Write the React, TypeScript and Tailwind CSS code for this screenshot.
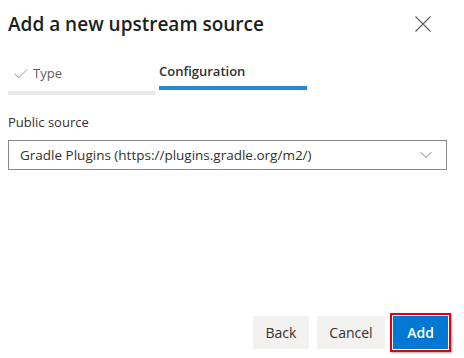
import { ChevronDown, Check } from "lucide-react";

function App() {
  return (
    <div className="w-[464px] h-[358px] bg-white flex flex-col text-[#323130] font-['Segoe_UI','Open_Sans',sans-serif]">
      {/*Header*/}
      <div className="flex items-center justify-between pl-2 pr-[33px] pt-[8px] h-[40px]">
        <h1 className="text-[19px] leading-[28px] font-semibold text-[#201f1e]">Add a new upstream source</h1>
        <svg width="16" height="16" viewBox="0 0 16 16" className="text-[#605e5c]">
          <path d="M0.5 0.5 L15.5 15.5 M15.5 0.5 L0.5 15.5" stroke="currentColor" strokeWidth="1.1" fill="none" />
        </svg>
      </div>

      {/*Tabs*/}
      <div className="flex px-2 mt-[17px] gap-1">
        <div className="w-[147px] flex flex-col">
          <div className="flex items-center gap-[3px] pl-[4px] h-[34px] text-[13px] text-[#605e5c]">
            <Check className="w-[18px] h-[18px] text-[#8a8886]" strokeWidth={1.1} />
            Type
          </div>
          <div className="h-[4px] bg-[#e8e8e8]" />
        </div>
        <div className="w-[148px] flex flex-col">
          <div className="h-[29px] flex items-center text-[13px] font-semibold text-[#323130]">Configuration</div>
          <div className="h-[4px] bg-[#2b88d8]" />
        </div>
      </div>

      {/*Field*/}
      <div className="px-2 mt-[18px] flex flex-col">
        <label className="text-[13px] leading-[18px] text-[#323130]">Public source</label>
        <div className="mt-[9px] w-[439px] h-[30px] border border-[#8a8886] flex items-center justify-between pl-[11px] pr-[10px]">
          <span className="text-[13.5px] text-[#323130]">Gradle Plugins (https://plugins.gradle.org/m2/)</span>
          <ChevronDown className="w-[20px] h-[20px] text-[#605e5c]" strokeWidth={1} />
        </div>
      </div>

      {/*Buttons*/}
      <div className="mt-auto flex justify-end items-center pr-[13px] pb-[6px]">
        <button className="w-[56px] h-[33px] bg-[#f3f2f1] rounded-[2px] text-[14px] text-[#323130]">Back</button>
        <button className="ml-2 w-[68px] h-[33px] bg-[#f3f2f1] rounded-[2px] text-[14px] text-[#323130]">Cancel</button>
        <div className="ml-[5px] border-2 border-[#e3000f] p-px shadow-[1px_1px_2px_rgba(0,0,0,0.35)]">
          <button className="w-[55px] h-[33px] bg-[#0078d4] text-[14px] font-semibold text-white">Add</button>
        </div>
      </div>
    </div>
  );
}

export default App;
